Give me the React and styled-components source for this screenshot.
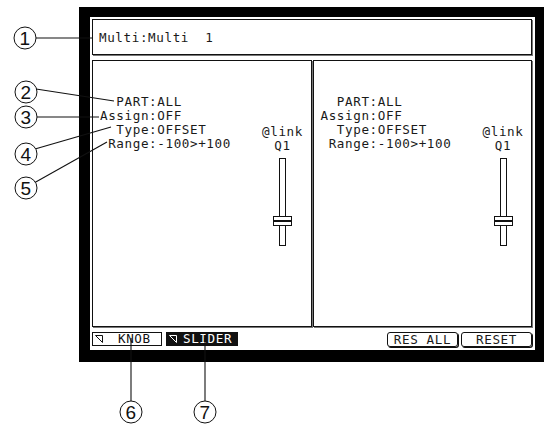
import React from "react";
import styled, { createGlobalStyle } from "styled-components";

const GlobalStyle = createGlobalStyle`
  html, body {
    margin: 0;
    padding: 0;
    background: #fff;
  }
  body {
    width: 548px;
    height: 432px;
    overflow: hidden;
  }
`;

const Page = styled.div`
  position: relative;
  width: 548px;
  height: 432px;
  box-sizing: border-box;
  padding: 7px 0 0 79px;
  font-family: "DejaVu Sans Mono", "Liberation Mono", monospace;
  font-size: 12.6px;
  letter-spacing: 0.6px;
  color: #1a1a1a;
`;

const Bezel = styled.div`
  width: 465px;
  height: 355px;
  box-sizing: border-box;
  background: #000;
  padding: 10px 9px 12px 11px;
`;

const Screen = styled.div`
  height: 100%;
  box-sizing: border-box;
  background: #fff;
  padding: 2px 3px 2px 2px;
  display: flex;
  flex-direction: column;
  gap: 5px;
`;

const TitleBox = styled.div`
  height: 36px;
  box-sizing: border-box;
  border: 1px solid #111;
  box-shadow: 1px 1px 0 #777;
  display: flex;
  align-items: center;
  padding-left: 6px;
  white-space: pre;
`;

const Panels = styled.div`
  height: 267px;
  display: flex;
  gap: 1px;
`;

const Panel = styled.div`
  flex: 1;
  box-sizing: border-box;
  border: 1px solid #111;
  box-shadow: 1px 1px 0 #777;
  display: flex;
  justify-content: space-between;
  padding: 0 8px 0 7px;
`;

const Params = styled.div`
  padding-top: 34px;
  line-height: 14px;
  white-space: pre;
`;

const SliderCol = styled.div`
  width: 40px;
  padding-top: 64px;
  display: flex;
  flex-direction: column;
  align-items: center;
  line-height: 14px;
`;

const Track = styled.div`
  position: relative;
  margin-top: 5px;
  width: 7px;
  height: 88px;
  box-sizing: border-box;
  border: 1px solid #111;
`;

const Knob = styled.div`
  position: absolute;
  left: -7px;
  top: ${(p) => p.$top}px;
  width: 19px;
  height: 10px;
  box-sizing: border-box;
  border: 1px solid #111;
  background: #fff;
  &::after {
    content: "";
    position: absolute;
    left: 0;
    right: 0;
    top: 3px;
    height: 2px;
    border-top: 1px solid #111;
    border-bottom: 1px solid #111;
    box-sizing: border-box;
  }
`;

const Bar = styled.div`
  height: 16px;
  display: flex;
  align-items: flex-start;
  gap: 4px;
`;

const Tab = styled.div`
  width: ${(p) => p.$w}px;
  height: 14px;
  box-sizing: border-box;
  border: 1px solid #111;
  background: ${(p) => (p.$active ? "#111" : "#fff")};
  color: ${(p) => (p.$active ? "#fff" : "#111")};
  display: flex;
  align-items: center;
  gap: ${(p) => p.$gap}px;
  padding-left: 2px;
  line-height: 12px;
`;

const Spacer = styled.div`
  flex: 1;
`;

const Buttons = styled.div`
  display: flex;
  gap: 3px;
`;

const Button = styled.div`
  width: ${(p) => p.$w}px;
  height: 15px;
  box-sizing: border-box;
  border: 1px solid #111;
  border-radius: 3px;
  box-shadow: 1px 1px 0 #111;
  display: flex;
  align-items: center;
  justify-content: center;
  line-height: 12px;
`;

const Overlay = styled.svg`
  position: absolute;
  left: 0;
  top: 0;
  pointer-events: none;
`;

const TabIcon = ({ color }) => (
  <svg width="8" height="8" viewBox="0 0 8 8">
    <path d="M0.5 0.5 H7.5 V7.5 Z" fill="none" stroke={color} strokeWidth="1" />
  </svg>
);

const lines = [
  "  PART:ALL",
  "Assign:OFF",
  "  Type:OFFSET",
  " Range:-100>+100",
];

const SidePanel = () => (
  <Panel>
    <Params>
      {lines.map((l) => (
        <div key={l}>{l}</div>
      ))}
    </Params>
    <SliderCol>
      <div>@link</div>
      <div>Q1</div>
      <Track>
        <Knob $top={57} />
      </Track>
    </SliderCol>
  </Panel>
);

const callouts = [
  { n: 1, cx: 25, cy: 38, line: "M36 38 L92 38" },
  { n: 2, cx: 26, cy: 92, line: "M36 89 L114 101" },
  { n: 3, cx: 26, cy: 117, line: "M37 117 L99 117" },
  { n: 4, cx: 26, cy: 154, line: "M35 149 L111 127" },
  { n: 5, cx: 26, cy: 188, line: "M34 183 L107 142" },
  { n: 6, cx: 131, cy: 412, line: "M131 338 L131 401" },
  { n: 7, cx: 205, cy: 412, line: "M205 338 L205 401" },
];

const Callouts = () => (
  <Overlay width="548" height="432" viewBox="0 0 548 432">
    {callouts.map((c) => (
      <g key={c.n}>
        <path d={c.line} stroke="#111" strokeWidth="1.1" fill="none" />
        <circle cx={c.cx} cy={c.cy} r="11" fill="#fff" stroke="#111" strokeWidth="1" />
        <text
          x={c.cx}
          y={c.cy + 7}
          textAnchor="middle"
          fontFamily="Liberation Sans, Arial, sans-serif"
          fontSize="19"
          fill="#111"
        >
          {c.n}
        </text>
      </g>
    ))}
  </Overlay>
);

export default function App() {
  return (
    <>
      <GlobalStyle />
      <Page>
        <Bezel>
          <Screen>
            <TitleBox>{"Multi:Multi  1"}</TitleBox>
            <Panels>
              <SidePanel />
              <SidePanel />
            </Panels>
            <Bar>
              <Tab $w={70} $gap={15}>
                <TabIcon color="#111" />
                <span>KNOB</span>
              </Tab>
              <Tab $w={72} $gap={6} $active>
                <TabIcon color="#fff" />
                <span>SLIDER</span>
              </Tab>
              <Spacer />
              <Buttons>
                <Button $w={71}>RES ALL</Button>
                <Button $w={71}>RESET</Button>
              </Buttons>
            </Bar>
          </Screen>
        </Bezel>
        <Callouts />
      </Page>
    </>
  );
}
